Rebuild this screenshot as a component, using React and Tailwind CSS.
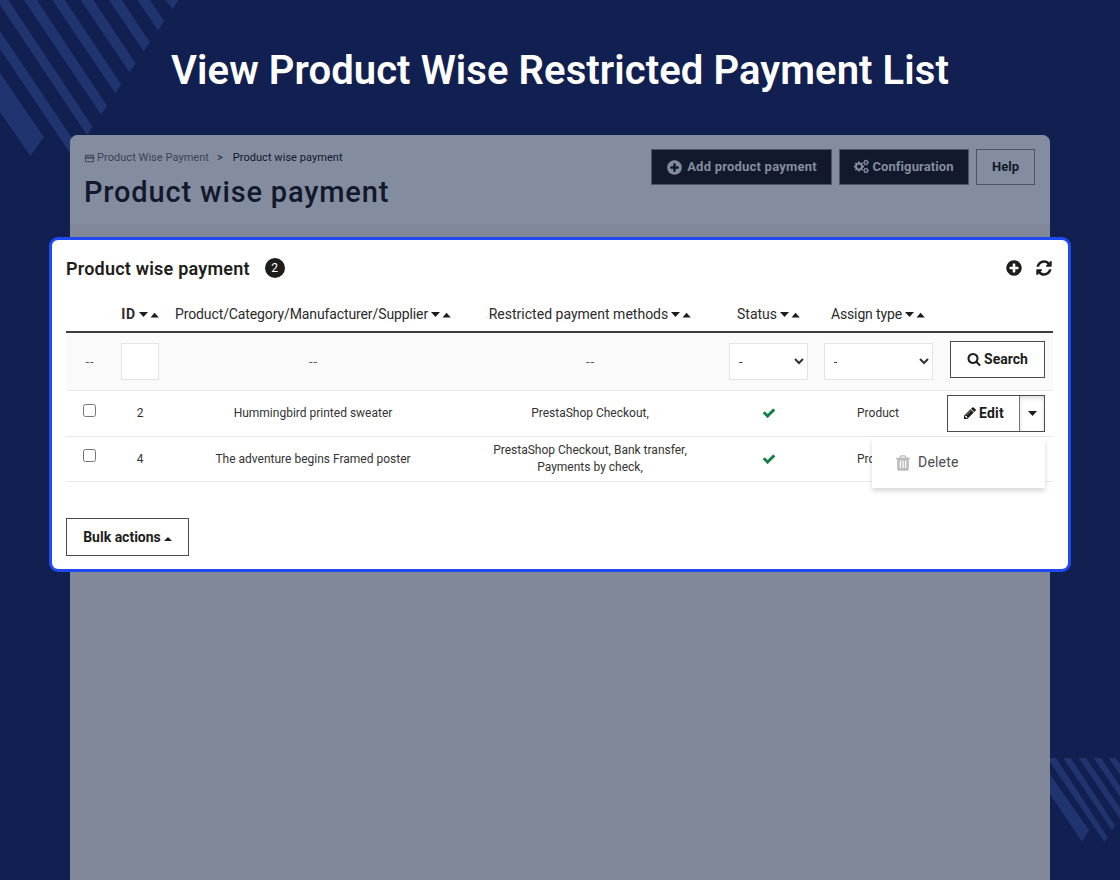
import React from 'react';
import { MdCreditCard } from 'react-icons/md';

// ─── Icons ───────────────────────
const SMALL_COG =
  'v140q0 16-149 31-12 27-30 52 51 113 51 138 0 4-4 7-122 71-124 71-8 0-46-47t-52-68q-20 2-30 2t-30-2q-14 21-52 68t-46 47q-2 0-124-71-4-3-4-7 0-25 51-138-18-25-30-52-149-15-149-31v-140q0-16 149-31 13-29 30-52-51-113-51-138 0-4 4-7 4-2 35-20t59-34 30-16q8 0 46 46.5t52 67.5q20-2 30-2t30 2q51-71 92-112l6-2q4 0 124 70 4 3 4 7 0 25-51 138 17 23 30 52 149 15 149 31z';

const ICONS = {
  search:
    'M1216 832q0-185-131.5-316.5t-316.5-131.5-316.5 131.5-131.5 316.5 131.5 316.5 316.5 131.5 316.5-131.5 131.5-316.5zm512 832q0 52-38 90t-90 38q-54 0-90-38l-343-342q-179 124-399 124-143 0-273.5-55.5t-225-150-150-225-55.5-273.5 55.5-273.5 150-225 225-150 273.5-55.5 273.5 55.5 225 150 150 225 55.5 273.5q0 220-124 399l343 343q37 37 37 90z',
  plus:
    'M1344 960v-128q0-26-19-45t-45-19h-256v-256q0-26-19-45t-45-19h-128q-26 0-45 19t-19 45v256h-256q-26 0-45 19t-19 45v128q0 26 19 45t45 19h256v256q0 26 19 45t45 19h128q26 0 45-19t19-45v-256h256q26 0 45-19t19-45zm320-64q0 209-103 385.5t-279.5 279.5-385.5 103-385.5-103-279.5-279.5-103-385.5 103-385.5 279.5-279.5 385.5-103 385.5 103 279.5 279.5 103 385.5z',
  refresh:
    'M1639 1056q0 5-1 7-64 268-268 434.5t-478 166.5q-146 0-282.5-55t-243.5-157l-129 129q-19 19-45 19t-45-19-19-45v-448q0-26 19-45t45-19h448q26 0 45 19t19 45-19 45l-137 137q71 66 161 102t187 36q134 0 250-65t186-179q11-17 53-117 8-23 30-23h192q13 0 22.5 9.5t9.5 22.5zm25-800v448q0 26-19 45t-45 19h-448q-26 0-45-19t-19-45 19-45l138-138q-148-137-349-137-134 0-250 65t-186 179q-11 17-53 117-8 23-30 23h-199q-13 0-22.5-9.5t-9.5-22.5v-7q65-268 270-434.5t480-166.5q146 0 284 55.5t245 156.5l130-129q19-19 45-19t45 19 19 45z',
  check:
    'M1671 566q0 40-28 68l-724 724-136 136q-28 28-68 28t-68-28l-136-136-362-362q-28-28-28-68t28-68l136-136q28-28 68-28t68 28l294 295 656-657q28-28 68-28t68 28l136 136q28 28 28 68z',
  pencil:
    'M491 1536l91-91-235-235-91 91v107h128v128h107zm523-928q0-22-22-22-10 0-17 7l-542 542q-7 7-7 17 0 22 22 22 10 0 17-7l542-542q7-7 7-17zm-54-192l416 416-832 832h-416v-416zm683 96q0 53-37 90l-166 166-416-416 166-165q36-38 90-38 53 0 91 38l235 234q37 39 37 91z',
  trash:
    'M704 1376v-704q0-14-9-23t-23-9h-64q-14 0-23 9t-9 23v704q0 14 9 23t23 9h64q14 0 23-9t9-23zm256 0v-704q0-14-9-23t-23-9h-64q-14 0-23 9t-9 23v704q0 14 9 23t23 9h64q14 0 23-9t9-23zm256 0v-704q0-14-9-23t-23-9h-64q-14 0-23 9t-9 23v704q0 14 9 23t23 9h64q14 0 23-9t9-23zm-544-992h448l-48-117q-7-9-17-11h-317q-10 2-17 11zm928 32v64q0 14-9 23t-23 9h-96v948q0 83-47 143.5t-113 60.5h-832q-66 0-113-58.5t-47-141.5v-952h-96q-14 0-23-9t-9-23v-64q0-14 9-23t23-9h309l70-167q15-37 54-63t79-26h320q40 0 79 26t54 63l70 167h309q14 0 23 9t9 23z',
  cogs:
    'M896 960q0-106-75-181t-181-75-181 75-75 181 75 181 181 75 181-75 75-181zm768 512q0-52-38-90t-90-38-90 38-38 90q0 53 37.5 90.5t90.5 37.5 90.5-37.5 37.5-90.5zm0-1024q0-52-38-90t-90-38-90 38-38 90q0 53 37.5 90.5t90.5 37.5 90.5-37.5 37.5-90.5zm-384 421v185q0 10-7 19.5t-16 10.5l-155 24q-11 35-32 76 34 48 90 115 7 11 7 20 0 12-7 19-23 30-82.5 89.5t-78.5 59.5q-11 0-21-7l-115-90q-37 19-77 31-11 108-23 155-7 24-30 24h-186q-11 0-20-7.5t-10-17.5l-23-153q-34-10-75-31l-118 89q-7 7-20 7-11 0-21-8-144-133-144-160 0-9 7-19 10-14 41-53t47-61q-23-44-35-82l-152-24q-10-1-17-9.5t-7-19.5v-185q0-10 7-19.5t16-10.5l155-24q11-35 32-76-34-48-90-115-7-11-7-20 0-12 7-20 22-30 82-89t79-59q11 0 21 7l115 90q34-18 77-32 11-108 23-154 7-24 30-24h186q11 0 20 7.5t10 17.5l23 153q34 10 75 31l118-89q8-7 20-7 11 0 21 8 144 133 144 160 0 8-7 19-12 16-42 54t-45 60q23 48 34 82l152 23q10 2 17 10.5t7 19.5zm640 533' +
    SMALL_COG +
    'm0-1024' +
    SMALL_COG,
};

function Icon({ name, className, viewBox = '0 0 1792 1792' }) {
  return (
    <svg viewBox={viewBox} className={className} fill="currentColor">
      <path d={ICONS[name]} />
    </svg>
  );
}

// ─── Data ───────────────────────
const COLUMNS = [
  { label: 'ID', className: 'font-bold tracking-[0.6px]' },
  { label: 'Product/Category/Manufacturer/Supplier', className: 'tracking-[-0.11px]' },
  { label: 'Restricted payment methods', className: 'tracking-[0.01px]' },
  { label: 'Status', className: 'tracking-[0px]' },
  { label: 'Assign type', className: 'tracking-[-0.12px]' },
];

const ROWS = [
  { id: 2, product: 'Hummingbird printed sweater', methods: ['PrestaShop Checkout,'], type: 'Product' },
  {
    id: 4,
    product: 'The adventure begins Framed poster',
    methods: ['PrestaShop Checkout, Bank transfer,', 'Payments by check,'],
    type: 'Product',
  },
];

const GRID = 'grid grid-cols-[47px_54px_292px_262px_95px_124px_113px] items-center text-center whitespace-nowrap';

function SortArrows() {
  return (
    <svg viewBox="0 0 20 6" className="ml-[3px] w-5 h-[6px] shrink-0" fill="#1d1d1b">
      <path d="M0 0h9L4.5 5z" />
      <path d="M11.5 5.5h8.3L15.6 .7z" />
    </svg>
  );
}

function Stripes() {
  return (
    <>
      <svg viewBox="0 0 180 160" className="absolute left-0 top-0 w-[180px] h-[160px]" fill="#20356f">
        <path d="M0 73 43.7 137 30.5 156 0 112z" />
        <path d="M0 31 78.7 148 72.7 157 0 49z" />
        <path d="M0 0h8.3L92.7 127 87 135 0 5z" />
        <path d="M24 0h12.7L107 105.7 101 114.5z" />
        <path d="M52.3 0h12.5L121.2 84.5 115.3 93.3z" />
        <path d="M80.7 0h12.6L135.5 63.3 129.5 72.3z" />
        <path d="M109 0h12.7L149.7 42.3 143.7 51.3z" />
        <path d="M137.3 0h12.7L164 21 158 30.3z" />
        <path d="M165.7 0h12.6L172.7 9z" />
      </svg>
      <svg viewBox="0 0 70 86" className="absolute left-[1050px] top-[758px] w-[70px] h-[86px]" fill="#20356f">
        <path d="M0 16.3 39 72.3 32 83.7 0 36z" />
        <path d="M0 0h6L57.3 79 54.3 83.7 0 4z" />
        <path d="M13.3 0h7.4L65.3 67.7 62 72.3z" />
        <path d="M28.7 0H36L70 50v10.7z" />
        <path d="M43.7 0H51L70 28v10.7z" />
        <path d="M58.7 0H66L70 6v10.7z" />
      </svg>
    </>
  );
}

export default function App() {
  return (
    <div className="relative w-[1120px] h-[880px] overflow-hidden bg-[#112050] font-['Roboto',sans-serif] text-[#1d1d1b]">
      <Stripes />

      <div className="relative flex flex-col h-full">
        <h1 className="h-[135px] pt-[47px] text-center text-[40px] leading-[48px] font-semibold tracking-[0.08px] text-white whitespace-nowrap">
          View Product Wise Restricted Payment List
        </h1>

        <div className="flex-1 mx-[70px] rounded-t-[8px] bg-[#80889a]">
          {/* PAGE HEADER */}
          <header className="flex justify-between h-[90px] pl-[14px] pr-[15px] rounded-t-[8px] bg-[#848c9f] border-b border-[#7b8498] text-[#12192c] whitespace-nowrap">
            <div className="pt-[15px]">
              <nav className="flex items-center h-4 text-[11px]">
                <MdCreditCard className="size-[11px] mr-[2px] mt-px text-[#3c4356]" />
                <span className="text-[#3c4356] tracking-[0.05px]">Product Wise Payment</span>
                <span className="ml-[8px] mr-[10px]">&gt;</span>
                <span className="tracking-[0.05px]">Product wise payment</span>
              </nav>
              <h2 className="mt-[7px] text-[29px] leading-[38px] font-medium tracking-[0.84px]">Product wise payment</h2>
            </div>
            <div className="flex gap-[7px] pt-[14px] text-[13px] font-bold">
              <button className="flex items-center justify-center w-[181px] h-[36px] bg-[#12192c] border border-[#4b5367] text-[#848c9f]">
                <Icon name="plus" className="size-[17px] mr-[4px]" />
                <span className="tracking-[0.22px]">Add product payment</span>
              </button>
              <button className="flex items-center justify-center w-[130px] h-[36px] bg-[#12192c] border border-[#4b5367] text-[#848c9f]">
                <Icon name="cogs" viewBox="0 0 1920 1792" className="w-[15px] h-[14px] mr-[3px] mb-[2px]" />
                <span className="tracking-[0.1px]">Configuration</span>
              </button>
              <button className="w-[59px] h-[36px] border border-[#4b5367]">Help</button>
            </div>
          </header>

          {/* LIST CARD */}
          <section className="-mx-[21px] mt-[12px] h-[335px] rounded-[9px] border-[3px] border-[#2149f2] bg-white pl-[14px] pr-[15px] whitespace-nowrap">
            <div className="flex items-center justify-between h-[60px] pb-[4px]">
              <div className="flex items-center">
                <h3 className="text-[18px] font-semibold tracking-[0.21px]">Product wise payment</h3>
                <span className="ml-[15px] flex items-center justify-center size-5 rounded-full bg-[#1d1d1b] text-white text-[12px]">2</span>
              </div>
              <div className="flex items-center gap-[12px]">
                <Icon name="plus" className="size-[18px]" />
                <Icon name="refresh" className="size-[18px]" />
              </div>
            </div>

            <div className={`${GRID} h-[33px] text-[14px] text-[#2b2b2b] border-b-2 border-[#3d3d3d]`}>
              <span />
              {COLUMNS.map((col) => (
                <div key={col.label} className="flex items-center justify-center -mt-[2px]">
                  <span className={col.className}>{col.label}</span>
                  <SortArrows />
                </div>
              ))}
              <span />
            </div>

            <div className={`${GRID} h-[58px] bg-[#fafafa] border-b border-[#ebebeb] text-[13px] text-[#555]`}>
              <span className="pl-px tracking-[1px]">--</span>
              <input className="justify-self-center mb-px w-[38px] h-[37px] bg-white border border-[#e5e5e5]" />
              <span className="pl-px tracking-[1px]">--</span>
              <span className="pl-px tracking-[1px]">--</span>
              <select className="justify-self-center mb-px w-[79px] h-[37px] pl-[5px] bg-white border border-[#e5e5e5] text-[#333]">
                <option>-</option>
              </select>
              <select className="justify-self-center mb-px w-[109px] h-[37px] pl-[5px] bg-white border border-[#e5e5e5] text-[#333]">
                <option>-</option>
              </select>
              <button className="justify-self-end mr-[8px] mb-[5px] flex items-center justify-center w-[95px] h-[37px] border border-[#4a4a4a] bg-white text-[#1d1d1b] text-[14px] font-bold">
                <Icon name="search" className="size-[14px] mr-[3px] mb-px" />
                Search
              </button>
            </div>

            {ROWS.map((row, idx) => (
              <div key={row.id} className={`${GRID} h-[45.5px] border-b border-[#e8e8e8] text-[12px] leading-[17px] text-[#333]`}>
                <input type="checkbox" className="justify-self-center size-[13px] mb-[6px]" />
                <span className="pt-px">{row.id}</span>
                <span className="pt-px">{row.product}</span>
                <div>
                  {row.methods.map((m) => (
                    <div key={m}>{m}</div>
                  ))}
                </div>
                <Icon name="check" className="justify-self-center size-[14px] text-[#1c7f49]" />
                <span className="pt-px">{row.type}</span>
                {idx === 0 && (
                  <div className="relative justify-self-end mr-[8px] flex w-[98px] h-[37px] border border-[#4a4a4a] bg-white text-[#1d1d1b]">
                    <button className="flex items-center justify-center flex-1 text-[14px] font-bold tracking-[0.2px]">
                      <Icon name="pencil" className="size-[14px] mr-[2px]" />
                      Edit
                    </button>
                    <button className="flex items-center justify-center w-[25px] border-l border-[#777] shadow-[inset_0_2px_4px_rgba(0,0,0,0.15)]">
                      <svg viewBox="0 0 9 5" className="w-[9px] h-[5px]" fill="#1d1d1b">
                        <path d="M0 0h9L4.5 5z" />
                      </svg>
                    </button>
                    {/* row actions menu */}
                    <div className="absolute z-10 right-[-1px] top-[42px] flex items-center w-[173px] h-[50px] pl-[22px] bg-white shadow-[0_3px_5px_rgba(0,0,0,0.16)] text-[14px] text-[#4a4a4a]">
                      <Icon name="trash" className="size-[18px] mr-[6px] text-[#bbb]" />
                      <span className="tracking-[0.2px]">Delete</span>
                    </div>
                  </div>
                )}
              </div>
            ))}

            <button className="mt-[36px] flex items-center justify-center w-[123px] h-[38px] border border-[#4a4a4a] text-[14px] font-bold">
              Bulk actions
              <svg viewBox="0 0 8 4" className="ml-[3px] mt-[3px] w-[8px] h-[4px]" fill="#1d1d1b">
                <path d="M0 4h8L4 0z" />
              </svg>
            </button>
          </section>
        </div>
      </div>
    </div>
  );
}
